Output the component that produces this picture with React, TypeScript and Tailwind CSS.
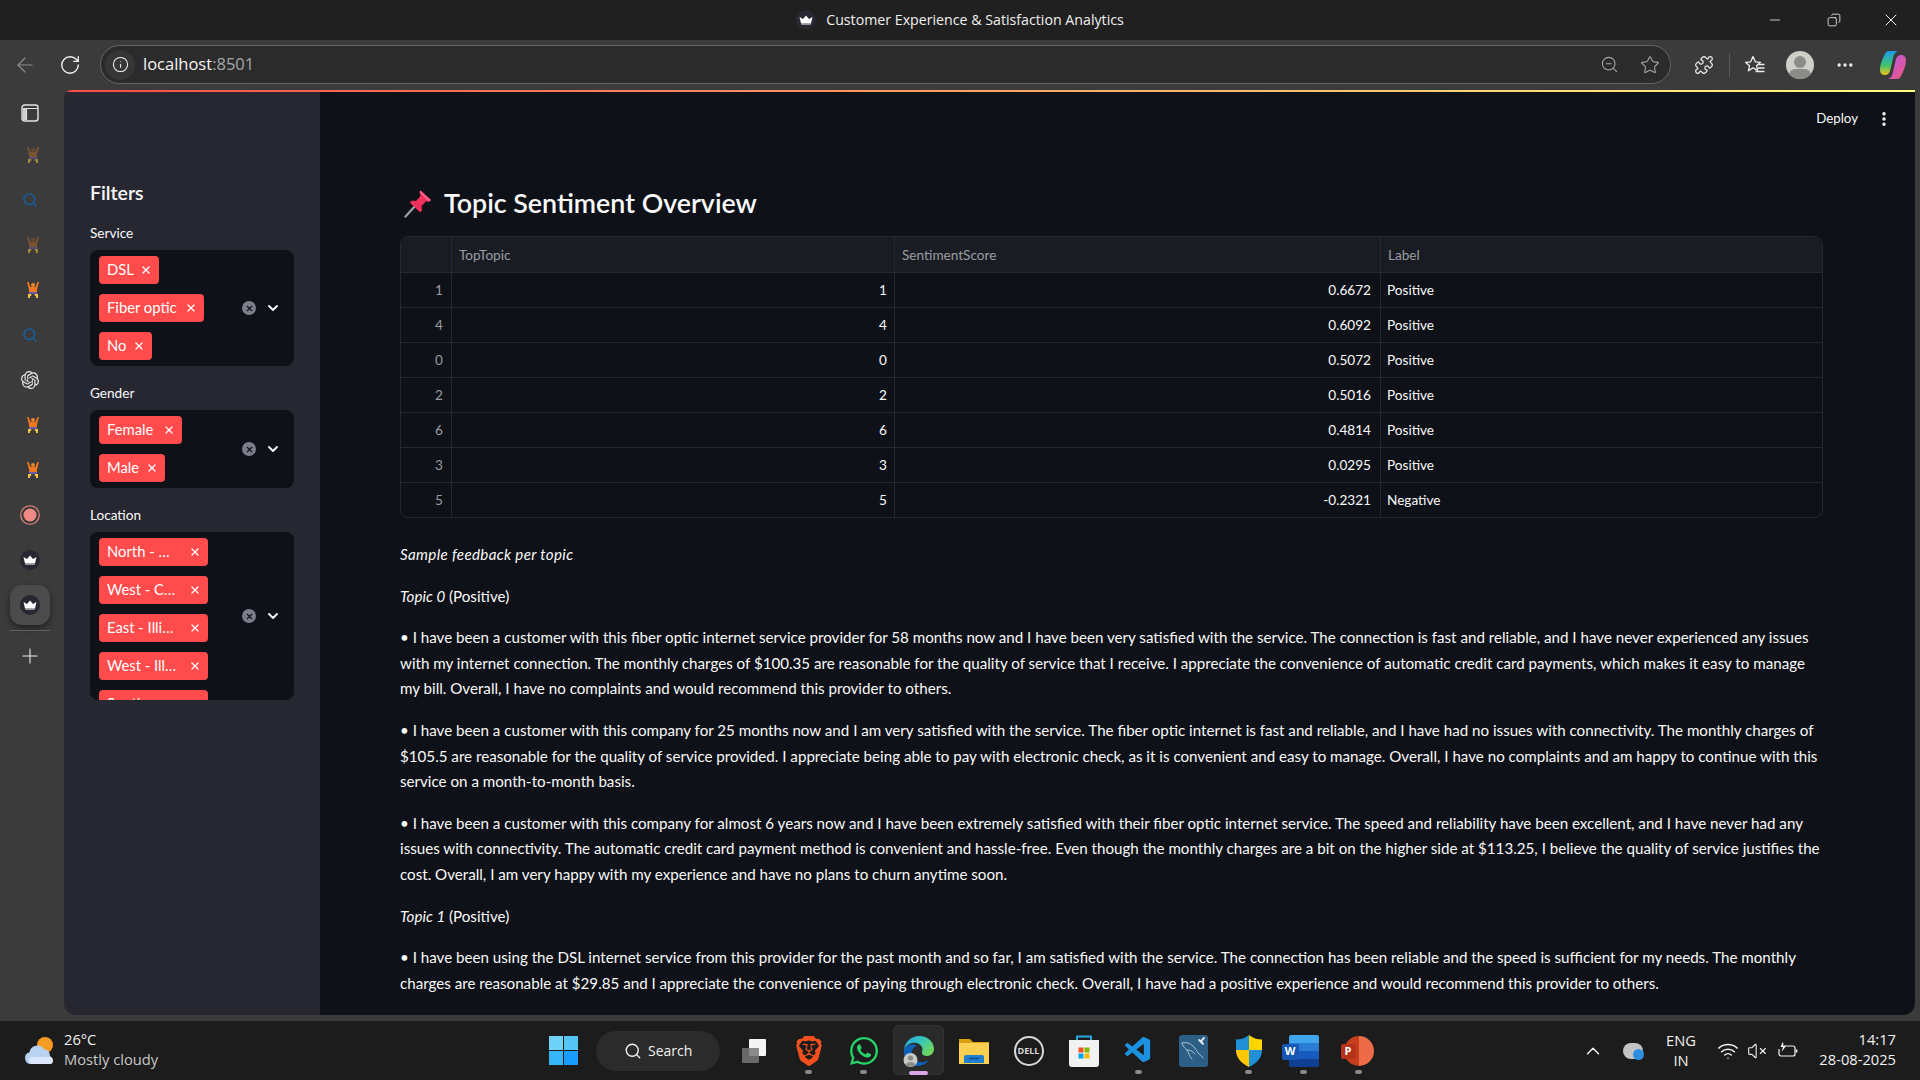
import { ArrowLeft, ChevronDown, ChevronUp, Copy, Ellipsis, EllipsisVertical, Info, Minus, Plus, Puzzle, RotateCw, Search, Star, VolumeX, Wifi, X, ZoomOut } from 'lucide-react'
import { FaWhatsapp } from 'react-icons/fa'
import { SiBrave, SiOpenai } from 'react-icons/si'
import { VscVscode } from 'react-icons/vsc'
import type { ReactNode } from 'react'

const Crown = ({ size = 20 }: { size?: number }) => (
  <svg width={size} height={size} viewBox="0 0 20 20">
    <circle cx="10" cy="10" r="10" fill="#262730" />
    <path d="M3.5 7 7 9l3-3.5L13 9l3.5-2-1.5 6.5H5z" fill="#fff" />
    <path d="M5 13.5h10l-.4 1.2H5.4z" fill="#bbb" />
  </svg>
)

const Lifter = ({ dim }: { dim?: boolean }) => (
  <svg width="16" height="18" viewBox="0 0 16 18" opacity={dim ? 0.55 : 1}>
    <path d="M2 1h1.6l2 5h4.8l2-5H14l-2 7.5V11H4V8.500z" fill={dim ? '#b06a2c' : '#f0761f'} />
    <circle cx="8" cy="4" r="2" fill={dim ? '#8a5a2a' : '#e9852a'} />
    <path d="M4 11h8v2H4z" fill="#6b5aa8" />
    <path d="M3 13h3.200v2H5v2H3zM9.800 13H13v4h-2v-2H9.800z" fill="#f5c542" />
  </svg>
)

const RailSearch = () => <Search size={16} strokeWidth={2.6} className="text-[#1a5a96]" />

const PanelIcon = () => (
  <svg width="18" height="18" viewBox="0 0 18 18">
    <rect x="1" y="1" width="16" height="16" rx="2.500" fill="none" stroke="#e5e5e5" strokeWidth="1.400" />
    <path d="M1.500 4.500h15M5.500 4.500v12" stroke="#e5e5e5" strokeWidth="1.200" />
    <path d="M1.700 4.500h3.800v11.800H3a1.300 1.300 0 0 1-1.300-1.300z" fill="#cfcfcf" />
  </svg>
)

const railItems: ReactNode[] = [
  <PanelIcon />,
  <span className="ml-[5px] flex"><Lifter dim /></span>,
  <RailSearch />,
  <span className="ml-[5px] flex"><Lifter dim /></span>,
  <span className="ml-[5px] flex"><Lifter /></span>,
  <RailSearch />,
  <SiOpenai size={18} className="text-[#e8e8e8]" />,
  <span className="ml-[5px] flex"><Lifter /></span>,
  <span className="ml-[5px] flex"><Lifter /></span>,
  <svg width="20" height="20" viewBox="0 0 20 20">
    <circle cx="10" cy="10" r="9.300" fill="none" stroke="#f08a84" strokeWidth="1.100" />
    <circle cx="10" cy="10" r="6.500" fill="#f08a84" />
  </svg>,
  <Crown />,
]

const Tag = ({ text, width }: { text: string; width: string }) => (
  <div className={`flex h-7 shrink-0 items-center justify-between rounded-[4px] bg-[#ff4b4b] pl-2 pr-[7px] text-[14.8px] text-white ${width}`}>
    <span className="mb-[2px] whitespace-nowrap">{text}</span>
    <X size={12} strokeWidth={2.6} />
  </div>
)

const MultiSelect = ({ tags, height }: { tags: [string, string][]; height: string }) => (
  <div className={`flex overflow-hidden rounded-lg bg-[#0e1117] ${height}`}>
    <div className="flex flex-1 flex-col gap-[10px] pl-[9px] pt-[6px]">
      {tags.map(([text, width]) => (
        <Tag key={text} text={text} width={width} />
      ))}
    </div>
    <div className="flex items-center gap-[9px] pr-[13px]">
      <div className="flex h-[14px] w-[14px] items-center justify-center rounded-full bg-[#7c7e8c]">
        <X size={9} strokeWidth={3} className="text-[#0e1117]" />
      </div>
      <ChevronDown size={16} strokeWidth={2.8} className="text-white" />
    </div>
  </div>
)

const rows = [
  ['1', '0.6672', 'Positive'],
  ['4', '0.6092', 'Positive'],
  ['0', '0.5072', 'Positive'],
  ['2', '0.5016', 'Positive'],
  ['6', '0.4814', 'Positive'],
  ['3', '0.0295', 'Positive'],
  ['5', '-0.2321', 'Negative'],
]

const gridCols = 'grid grid-cols-[51px_443px_486px_1fr]'

const DataTable = () => (
  <div className="mt-[13px] overflow-hidden rounded-lg border border-[#26282e] text-[13.6px]">
    <div className={`${gridCols} h-[35px] bg-[#1a1c24] text-[#9a9ca1]`}>
      <div className="border-r border-[#26282e]" />
      <div className="flex items-center border-r border-[#26282e] pl-[7px] pt-[2px]">TopTopic</div>
      <div className="flex items-center border-r border-[#26282e] pl-[7px] pt-[2px]">SentimentScore</div>
      <div className="flex items-center pl-[7px] pt-[2px]">Label</div>
    </div>
    {rows.map(([id, score, label]) => (
      <div key={id} className={`${gridCols} h-[35px] border-t border-[#26282e] text-[#fafafa]`}>
        <div className="flex items-center justify-end border-r border-[#26282e] pr-[8px] text-[#9a9ca1]">{id}</div>
        <div className="flex items-center justify-end border-r border-[#26282e] pr-[7px]">{id}</div>
        <div className="flex items-center justify-end border-r border-[#26282e] pr-[9px]">{score}</div>
        <div className="flex items-center pl-[6px]">{label}</div>
      </div>
    ))}
  </div>
)

const feedback: ReactNode[] = [
  <p className="tracking-[0.34px]"><em>Sample feedback per topic</em></p>,
  <p><em>Topic 0</em> (Positive)</p>,
  <p>
    • I have been a customer with this fiber optic internet service provider for 58 months now and I have been very satisfied with the service. The connection is fast and reliable, and I have never experienced any issues<br />
    with my internet connection. The monthly charges of $100.35 are reasonable for the quality of service that I receive. I appreciate the convenience of automatic credit card payments, which makes it easy to manage<br />
    my bill. Overall, I have no complaints and would recommend this provider to others.
  </p>,
  <p>
    • I have been a customer with this company for 25 months now and I am very satisfied with the service. The fiber optic internet is fast and reliable, and I have had no issues with connectivity. The monthly charges of<br />
    $105.5 are reasonable for the quality of service provided. I appreciate being able to pay with electronic check, as it is convenient and easy to manage. Overall, I have no complaints and am happy to continue with this<br />
    service on a month-to-month basis.
  </p>,
  <p>
    • I have been a customer with this company for almost 6 years now and I have been extremely satisfied with their fiber optic internet service. The speed and reliability have been excellent, and I have never had any<br />
    issues with connectivity. The automatic credit card payment method is convenient and hassle-free. Even though the monthly charges are a bit on the higher side at $113.25, I believe the quality of service justifies the<br />
    cost. Overall, I am very happy with my experience and have no plans to churn anytime soon.
  </p>,
  <p><em>Topic 1</em> (Positive)</p>,
  <p>
    • I have been using the DSL internet service from this provider for the past month and so far, I am satisfied with the service. The connection has been reliable and the speed is sufficient for my needs. The monthly<br />
    charges are reasonable at $29.85 and I appreciate the convenience of paying through electronic check. Overall, I have had a positive experience and would recommend this provider to others.
  </p>,
]

const Pin = () => (
  <svg width="30" height="30" viewBox="0 0 30 30">
    <path d="M13 17 2.500 28.500" stroke="#9a9aa5" strokeWidth="2.400" strokeLinecap="round" />
    <path d="M17.500 2.500 28 12l-2.200 1.800-2.800-.6-4.500 5 .6 4-2.100 2L6.800 14.600l2.300-2 4 .5 4.300-5-.4-3z" fill="#f0305f" />
    <path d="M17.500 2.500 28 12l-2.200 1.800-9.600-9.500z" fill="#ff5c86" />
  </svg>
)

const EdgeIcon = () => (
  <svg width="32" height="32" viewBox="0 0 32 32">
    <defs>
      <linearGradient id="edgeA" x1="0" y1="0" x2="1" y2="0.600">
        <stop offset="0" stopColor="#2f9fe8" />
        <stop offset="0.5" stopColor="#30c6c0" />
        <stop offset="1" stopColor="#6fd65a" />
      </linearGradient>
    </defs>
    <path d="M1 15C2 6 9 1 16 1c9 0 15 6 15 13 0 4-3 7-7 7-3 0-5-1-5-3 0-3 1-3 0-6-2-4-6-5-10-4-4 1-7 4-8 7z" fill="url(#edgeA)" />
    <path d="M1 15c2-5 9-7 13-4-4 1-6 5-5 9 1 5 6 8 12 7 3-1 5-2 6-4-3 6-8 8-13 8C7 31 0 24 1 15z" fill="#0c62b8" />
    <circle cx="7.500" cy="25" r="7" fill="#c9c9c6" />
    <circle cx="7.500" cy="23" r="2.600" fill="#8a8a88" />
    <path d="M2.500 30c1-4 9-4 10 0-2 2-8 2-10 0z" fill="#8a8a88" />
  </svg>
)

const FolderIcon = () => (
  <svg width="30" height="30" viewBox="0 0 30 30">
    <path d="M0 3h11l3 3h16v22H0z" fill="#d9a012" />
    <path d="M0 7h30v21H0z" fill="#fbcf4f" />
    <path d="M5 27v-6a2 2 0 0 1 2-2h16a2 2 0 0 1 2 2v6z" fill="#1f7fd1" />
    <path d="M10 22.500h10" stroke="#0d4f91" strokeWidth="1.500" />
  </svg>
)

const StoreIcon = () => (
  <svg width="30" height="32" viewBox="0 0 30 32">
    <path d="M8 6V1.500h14V6" fill="none" stroke="#2aa8e0" strokeWidth="2" />
    <path d="M0 5h30v24a3 3 0 0 1-3 3H3a3 3 0 0 1-3-3z" fill="#f2f2f2" />
    <rect x="9.500" y="12.500" width="5" height="5" fill="#f25022" />
    <rect x="15.500" y="12.500" width="5" height="5" fill="#7fba00" />
    <rect x="9.500" y="18.500" width="5" height="5" fill="#00a4ef" />
    <rect x="15.500" y="18.500" width="5" height="5" fill="#ffb900" />
  </svg>
)

const ShieldIcon = () => (
  <svg width="26" height="32" viewBox="0 0 26 32">
    <path d="M13 0C9 3 5 4.500 0 4.500V15h13z" fill="#1f8fd6" />
    <path d="M13 0c4 3 8 4.500 13 4.500V15H13z" fill="#ffd500" />
    <path d="M0 15c0 8 5 13 13 17V15z" fill="#ffc800" />
    <path d="M26 15c0 8-5 13-13 17V15z" fill="#1f8fd6" />
  </svg>
)

const MysqlIcon = () => (
  <div className="relative flex h-[32px] w-[29px] items-center justify-center rounded-[3px] bg-[#2c5f86]">
    <svg width="27" height="30" viewBox="0 0 27 30" fill="none" stroke="#b8cbd8" strokeWidth="0.900" strokeLinecap="round">
      <path d="M2 7c4-1 8 0 11 3 3 3 4 6 6 8 1 1 3 2 4 4" />
      <path d="M2 7c1 4 3 5 5 7 2 3 2 6 5 9" />
      <path d="M7 14c3 0 6 1 8 4" />
      <path d="M19 4l3 3M24 2l-3 3 2 3" strokeWidth="1.800" stroke="#dfe8ee" />
    </svg>
  </div>
)

const WordIcon = () => (
  <div className="relative flex h-[32px] w-[30px] flex-col overflow-hidden rounded-[2px]">
    <div className="flex-1 bg-[#41a5ee]" />
    <div className="flex-1 bg-[#2b7cd3]" />
    <div className="flex-1 bg-[#185abd]" />
    <div className="flex-1 bg-[#103f91]" />
  </div>
)

const taskItems: { icon: ReactNode; dot?: boolean; active?: boolean }[] = [
  {
    icon: (
      <svg width="24" height="24" viewBox="0 0 24 24">
        <rect x="7" y="0" width="17" height="17" rx="1" fill="#f5f5f5" />
        <rect x="0" y="9" width="17" height="15" rx="1" fill="#777" opacity="0.85" />
      </svg>
    ),
  },
  { icon: <SiBrave size={30} className="text-[#f1501e]" />, dot: true },
  { icon: <FaWhatsapp size={32} className="text-[#25d366]" />, dot: true },
  { icon: <EdgeIcon />, active: true },
  { icon: <FolderIcon /> },
  {
    icon: (
      <div className="flex h-[30px] w-[30px] items-center justify-center rounded-full border-2 border-[#d8d8d8]">
        <span className="text-[9px] font-bold leading-none text-[#d8d8d8]">DELL</span>
      </div>
    ),
  },
  { icon: <StoreIcon /> },
  { icon: <VscVscode size={31} className="text-[#1b91e0]" />, dot: true },
  { icon: <MysqlIcon /> },
  { icon: <ShieldIcon />, dot: true },
  {
    icon: (
      <div className="relative">
        <WordIcon />
        <div className="absolute left-[-7px] top-[9px] flex h-[16px] w-[17px] items-center justify-center rounded-[2px] bg-[#1557b5] text-[11px] font-bold text-white">W</div>
      </div>
    ),
    dot: true,
  },
  {
    icon: (
      <div className="relative">
        <div className="h-[30px] w-[30px] rounded-full bg-[linear-gradient(90deg,#c43e1c_50%,#ed6c47_50%)]" />
        <div className="absolute left-[-3px] top-[8px] flex h-[15px] w-[15px] items-center justify-center rounded-[2px] bg-[#b7321a] text-[11px] font-bold text-white">P</div>
      </div>
    ),
    dot: true,
  },
]

const WeatherIcon = () => (
  <svg width="32" height="30" viewBox="0 0 32 30">
    <circle cx="21" cy="9" r="8" fill="#f59a23" />
    <path d="M7 28a6 6 0 0 1-1.500-11.800A8 8 0 0 1 20 13a6.500 6.500 0 0 1 6 7 4.500 4.500 0 0 1 0 8z" fill="#b9d2f2" />
    <path d="M7 28a4 4 0 0 1 0-7h20a4 4 0 0 1 0 7z" fill="#dbe8fb" />
  </svg>
)

const Copilot = () => (
  <svg width="28" height="30" viewBox="0 0 28 30">
    <defs>
      <linearGradient id="copA" x1="0" y1="0" x2="0" y2="1">
        <stop offset="0" stopColor="#1c9bf0" />
        <stop offset="0.6" stopColor="#3fc46a" />
        <stop offset="1" stopColor="#f2c21a" />
      </linearGradient>
      <linearGradient id="copB" x1="0" y1="0" x2="1" y2="1">
        <stop offset="0" stopColor="#b05ce6" />
        <stop offset="0.7" stopColor="#e0569e" />
        <stop offset="1" stopColor="#f36b3a" />
      </linearGradient>
    </defs>
    <path d="M10 1h9c-3 1-4 3-5 7l-3 13c-1 3-3 4-5 4-3 0-5-2-5-5 0-6 3-12 5-16 1-2 2-3 4-3z" fill="url(#copA)" />
    <path d="M18 29H9c3-1 4-3 5-7l3-13c1-3 3-4 5-4 3 0 5 2 5 5 0 6-3 12-5 16-1 2-2 3-4 3z" fill="url(#copB)" />
  </svg>
)

const FavoritesIcon = () => (
  <svg width="22" height="22" viewBox="0 0 22 22" fill="none" stroke="#ededed" strokeWidth="1.300" strokeLinejoin="round">
    <path d="M9 2.500l2.300 5.300 5.200.5-3.900 3.500 1 4.700-4.600-2.600-4.600 2.900 1.100-5L1.500 8.300l5.200-.5z" />
    <path d="M14.500 10.500h6M14 14h6.500M11.500 17.500h9" />
  </svg>
)

const BatteryIcon = () => (
  <svg width="20" height="20" viewBox="0 0 20 20" fill="none" stroke="#f2f2f2" strokeWidth="1.200" strokeLinejoin="round">
    <path d="M6 5h9a2 2 0 0 1 2 2v6a2 2 0 0 1-2 2H3a2 2 0 0 1-2-2V8" />
    <path d="M18.500 8.500v3" strokeWidth="1.600" />
    <path d="M5 0.500 2.500 6h2.500L3.500 11 8 5H5.500z" fill="#f2f2f2" stroke="none" />
  </svg>
)

export default function App() {
  return (
    <div className="flex h-[1080px] w-[1920px] flex-col overflow-hidden bg-[#3b3b3b] font-['Lato',sans-serif] text-[#fafafa]">
      <div className="relative flex h-10 shrink-0 items-center justify-center bg-[#202020] font-['Open_Sans',sans-serif] text-[14.2px] text-[#f0f0f0]">
        <div className="flex items-center gap-[10px]">
          <Crown size={20} />
          <span>Customer Experience &amp; Satisfaction Analytics</span>
        </div>
        <div className="absolute right-0 top-0 flex h-10 items-center text-[#f2f2f2]">
          <Minus size={16} strokeWidth={1.2} className="mr-[44px]" />
          <Copy size={14} strokeWidth={1.4} className="mr-[40px] scale-x-[-1]" />
          <X size={20} strokeWidth={1.2} className="mr-[19px]" />
        </div>
      </div>

      <div className="flex h-[50px] shrink-0 items-center bg-[#3b3b3b] pb-[1px]">
        <ArrowLeft size={24} strokeWidth={1.2} className="ml-[13px] text-[#8d8d8d]" />
        <RotateCw size={22} strokeWidth={1.5} className="ml-[22px] text-[#f2f2f2]" />
        <div className="ml-[19px] flex h-[39px] w-[1571px] items-center rounded-full border border-[#666] bg-[#2b2b2b]">
          <div className="ml-[4px] flex h-[30px] w-[30px] items-center justify-center rounded-full bg-[#363636]">
            <Info size={17} strokeWidth={1.5} className="text-[#f2f2f2]" />
          </div>
          <span className="ml-[8px] font-['Open_Sans',sans-serif] text-[16.5px] text-[#f5f5f5]">
            localhost<span className="text-[#a6a6a6]">:8501</span>
          </span>
          <ZoomOut size={19} strokeWidth={1.3} className="ml-auto text-[#a8a8a8]" />
          <Star size={20} strokeWidth={1.3} className="ml-[21px] mr-[10px] text-[#a8a8a8]" />
        </div>
        <Puzzle size={20} strokeWidth={1.5} className="ml-[23px] text-[#ededed]" />
        <div className="ml-[15px] h-6 w-px bg-[#5a5a5a]" />
        <div className="ml-[14px] flex"><FavoritesIcon /></div>
        <div className="relative ml-[20px] h-[28px] w-[28px] overflow-hidden rounded-full bg-[#cfcfca]">
          <div className="mx-auto mt-[5px] h-[12px] w-[12px] rounded-full bg-[#8b8b88]" />
          <div className="mx-auto mt-[1px] h-[12px] w-[22px] rounded-full bg-[#8b8b88]" />
        </div>
        <Ellipsis size={20} className="ml-[21px] text-[#ededed]" />
        <div className="ml-[24px]"><Copilot /></div>
      </div>

      <div className="flex min-h-0 flex-1">
        <div className="flex w-16 shrink-0 flex-col">
          {railItems.map((item, i) => (
            <div key={i} className={`flex w-[60px] shrink-0 items-center justify-center ${i === 0 ? 'h-[42px] pt-[3px]' : 'h-[45px]'}`}>{item}</div>
          ))}
          <div className="ml-[10px] mt-[3px] flex h-[40px] w-[40px] shrink-0 items-center justify-center rounded-xl bg-[#4b4b4b] shadow-[0_3px_6px_rgba(0,0,0,0.45)]">
            <Crown />
          </div>
          <div className="ml-[10px] mt-[5px] h-px w-[40px] bg-[#5f5f5f]" />
          <div className="flex h-[49px] w-[59px] items-center justify-center">
            <Plus size={24} strokeWidth={1.1} className="text-[#ededed]" />
          </div>
        </div>

        <div className="mr-[5px] mb-[6px] flex min-w-0 flex-1 flex-col overflow-hidden rounded-b-xl rounded-tl-lg">
          <div className="h-[2px] shrink-0 bg-[linear-gradient(90deg,#ff4b4b,#fffd80)]" />
          <div className="flex min-h-0 flex-1">
            <aside className="flex w-64 shrink-0 flex-col bg-[#262730] pl-[26px] pr-[26px] pt-[87px]">
              <div className="h-7 text-[19.5px] font-semibold leading-7">Filters</div>
              <div className="mb-[7px] mt-[16px] h-5 text-[13.6px] leading-5">Service</div>
              <MultiSelect height="h-[116px]" tags={[['DSL', 'w-[60px]'], ['Fiber optic', 'w-[105px]'], ['No', 'w-[53px]']]} />
              <div className="mb-[7px] mt-[17px] h-5 text-[13.6px] leading-5">Gender</div>
              <MultiSelect height="h-[78px]" tags={[['Female', 'w-[83px]'], ['Male', 'w-[66px]']]} />
              <div className="mb-[7px] mt-[17px] h-5 text-[13.6px] leading-5">Location</div>
              <MultiSelect
                height="h-[168px]"
                tags={[
                  ['North - …', 'w-[109px]'],
                  ['West - C…', 'w-[109px]'],
                  ['East - Illi…', 'w-[109px]'],
                  ['West - Ill…', 'w-[109px]'],
                  ['South - …', 'w-[109px]'],
                ]}
              />
            </aside>
            <main className="min-w-0 flex-1 overflow-hidden bg-[#0e1117]">
              <div className="flex h-[54px] items-center justify-end gap-[17px] pr-[22px] text-[13.3px]">
                <span>Deploy</span>
                <EllipsisVertical size={18} strokeWidth={2.6} />
              </div>
              <div className="pl-[80px] pr-[92px]">
                <div className="mt-[37px] flex h-10 items-center gap-[11px] text-[26.8px] font-semibold">
                  <span className="ml-[3px] flex"><Pin /></span>
                  <h1>Topic Sentiment Overview</h1>
                </div>
                <DataTable />
                <div className="mt-[24px] flex flex-col gap-4 text-[15.15px] leading-[25.6px]">
                  {feedback.map((node, i) => (
                    <div key={i} className="whitespace-nowrap">{node}</div>
                  ))}
                </div>
              </div>
            </main>
          </div>
        </div>
      </div>

      <div className="flex h-[59px] shrink-0 items-center bg-[#1c1c1c] font-['Open_Sans',sans-serif] text-[14.7px]">
        <div className="flex w-[549px] shrink-0 items-center pl-[24px]">
          <WeatherIcon />
          <div className="ml-[8px] pb-[4px] leading-5">
            <div className="text-[#f2f2f2]">26°C</div>
            <div className="text-[#c8c8c8]">Mostly cloudy</div>
          </div>
        </div>
        <div className="grid h-[29px] w-[29px] shrink-0 grid-cols-2 gap-px">
          <div className="bg-[#6fd3f7]" />
          <div className="bg-[#55c5f5]" />
          <div className="bg-[#36b5f8]" />
          <div className="bg-[#1a9dfa]" />
        </div>
        <div className="ml-[18px] flex h-10 w-[124px] shrink-0 items-center gap-[6px] rounded-full bg-[#2b2b2b] pl-[28px] text-sm text-[#f2f2f2]">
          <Search size={18} strokeWidth={1.8} />
          <span>Search</span>
        </div>
        <div className="ml-[6px] flex h-full shrink-0">
          {taskItems.map((item, i) => (
            <div key={i} className="relative flex h-full w-[55px] items-center justify-center">
              {item.active && <div className="absolute inset-x-[2px] top-[4px] h-[50px] rounded-md border border-[#333] bg-[#2a2a2a]" />}
              <div className="relative flex">{item.icon}</div>
              {item.dot && <div className="absolute bottom-[6px] left-[24px] h-[4px] w-[7px] rounded-full bg-[#8a8a8a]" />}
              {item.active && <div className="absolute bottom-[5px] left-[18px] h-[4px] w-[19px] rounded-full bg-[#dba6e8]" />}
            </div>
          ))}
        </div>
        <div className="ml-auto flex h-full items-center pr-[24px] text-[#f2f2f2]">
          <div className="flex w-10 justify-center"><ChevronUp size={22} strokeWidth={1.6} /></div>
          <div className="relative flex w-10 justify-center">
            <div className="h-[16px] w-[20px] rounded-full bg-[#c4c4c4]" />
            <div className="absolute left-[20px] top-[6px] h-[11px] w-[11px] rounded-full bg-[#2d8fe0]" />
          </div>
          <div className="w-14 pb-[2px] text-center leading-5">
            <div>ENG</div>
            <div>IN</div>
          </div>
          <div className="flex w-[38px] justify-center"><Wifi size={22} strokeWidth={1.6} /></div>
          <div className="flex w-5 items-center justify-center"><VolumeX size={20} strokeWidth={1.3} className="shrink-0" /></div>
          <div className="flex w-[42px] justify-center"><BatteryIcon /></div>
          <div className="w-[87px] pb-[4px] text-right leading-5">
            <div>14:17</div>
            <div>28-08-2025</div>
          </div>
        </div>
      </div>
    </div>
  )
}
